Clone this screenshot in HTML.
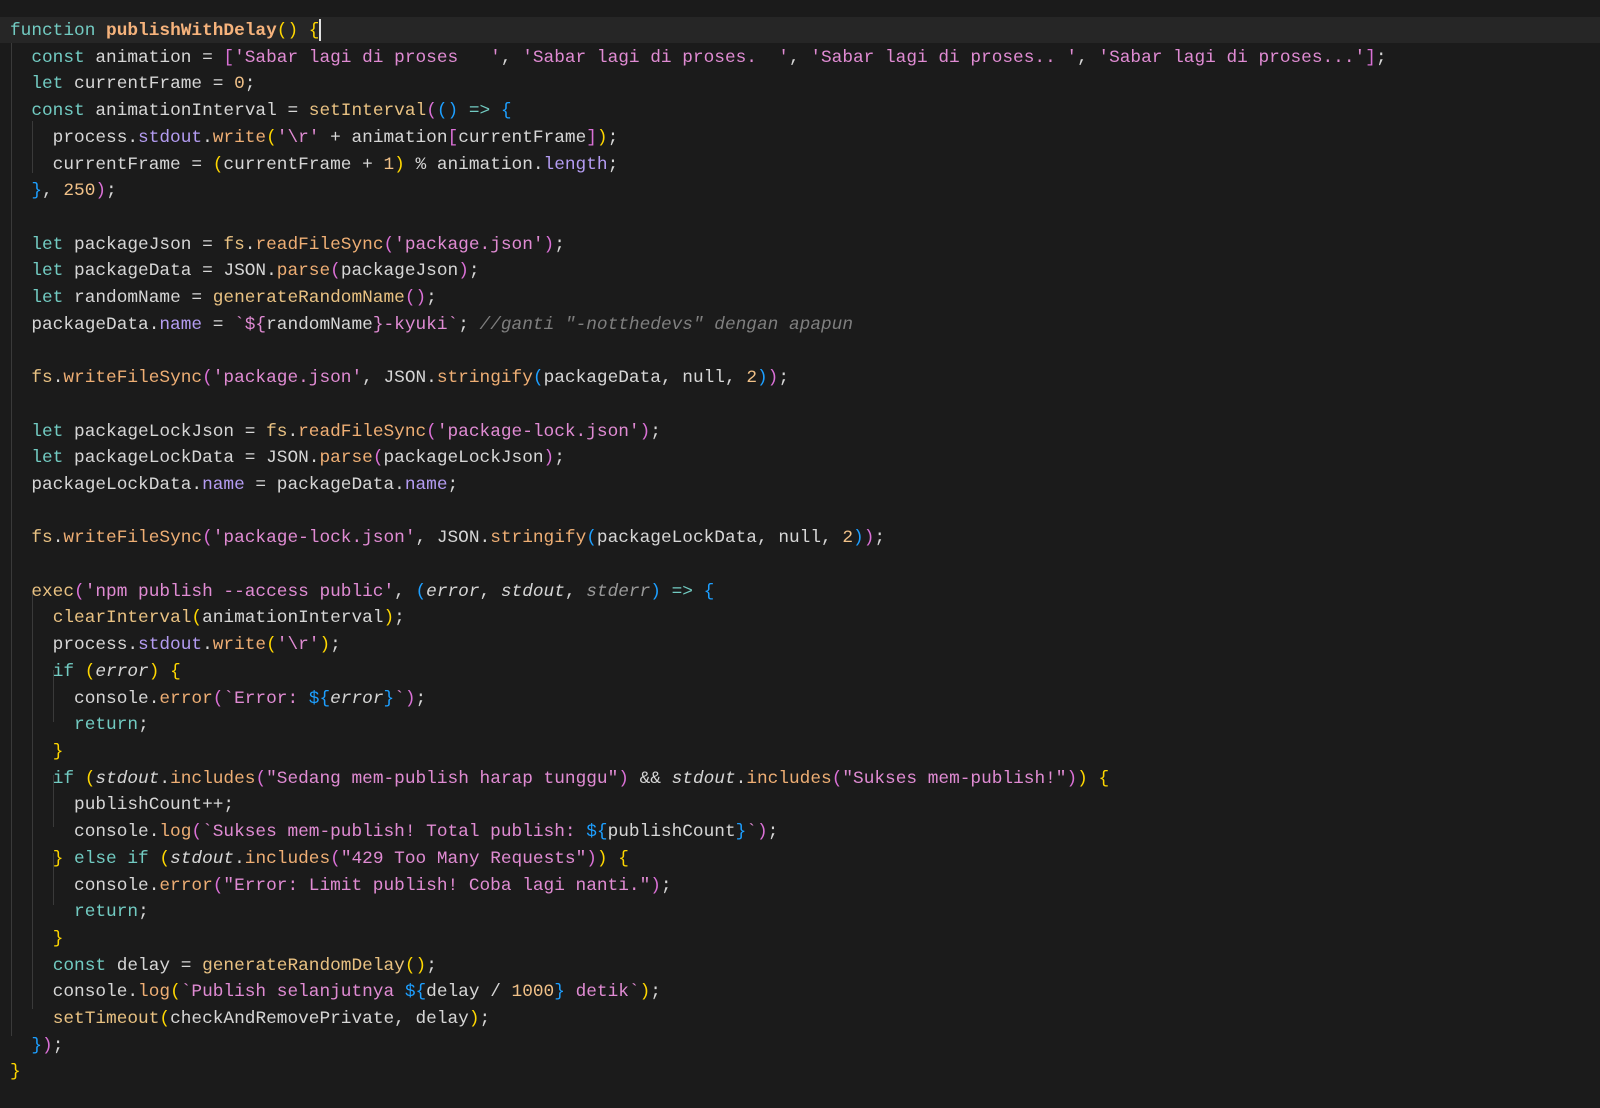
<!DOCTYPE html>
<html><head><meta charset="utf-8"><style>
html,body{margin:0;padding:0;background:#1b1b1b;width:1600px;height:1108px;overflow:hidden}
.code{position:absolute;left:10px;top:18px;font-family:"Liberation Mono",monospace;font-size:17.8px;line-height:26.7px;color:#d6d6d6;white-space:pre}
.hl{position:absolute;left:0;top:17px;width:1600px;height:26px;background:#262626}
.g{position:absolute;width:1px;background:#3a3a3a}
.k{color:#72cbc2}.fd{color:#f6b37c;font-weight:bold}.fn{color:#e8c182}.m{color:#eeae74}
.p{color:#b49cf2}.s{color:#e08bd3}.n{color:#f1c188}.c{color:#7f7f7f;font-style:italic}
.y{color:#ffd700}.v{color:#da70d6}.b{color:#1d9fff}.i{font-style:italic}.ig{color:#9a9a9a;font-style:italic}
.cur{display:inline-block;width:2px;height:22px;background:#e0e0e0;vertical-align:middle}
</style></head><body>
<div class="hl"></div>
<div class="g" style="left:11px;top:43px;height:993px"></div>
<div class="g" style="left:32px;top:121px;height:52px"></div>
<div class="g" style="left:32px;top:591px;height:418px"></div>
<div class="g" style="left:53px;top:670px;height:52px"></div>
<div class="g" style="left:53px;top:775px;height:52px"></div>
<div class="g" style="left:53px;top:853px;height:52px"></div>
<div class="code"><span class="k">function</span> <span class="fd">publishWithDelay</span><span class="y">()</span> <span class="y">{</span><span class="cur"></span>
  <span class="k">const</span> animation = <span class="v">[</span><span class="s">'Sabar lagi di proses   '</span>, <span class="s">'Sabar lagi di proses.  '</span>, <span class="s">'Sabar lagi di proses.. '</span>, <span class="s">'Sabar lagi di proses...'</span><span class="v">]</span>;
  <span class="k">let</span> currentFrame = <span class="n">0</span>;
  <span class="k">const</span> animationInterval = <span class="fn">setInterval</span><span class="v">(</span><span class="b">()</span> <span class="k">=&gt;</span> <span class="b">{</span>
    process.<span class="p">stdout</span>.<span class="m">write</span><span class="y">(</span><span class="s">'\r'</span> + animation<span class="v">[</span>currentFrame<span class="v">]</span><span class="y">)</span>;
    currentFrame = <span class="y">(</span>currentFrame + <span class="n">1</span><span class="y">)</span> % animation.<span class="p">length</span>;
  <span class="b">}</span>, <span class="n">250</span><span class="v">)</span>;

  <span class="k">let</span> packageJson = <span class="fn">fs</span>.<span class="m">readFileSync</span><span class="v">(</span><span class="s">'package.json'</span><span class="v">)</span>;
  <span class="k">let</span> packageData = JSON.<span class="m">parse</span><span class="v">(</span>packageJson<span class="v">)</span>;
  <span class="k">let</span> randomName = <span class="fn">generateRandomName</span><span class="v">()</span>;
  packageData.<span class="p">name</span> = <span class="s">`</span><span class="s">${</span>randomName<span class="s">}-kyuki`</span>; <span class="c">//ganti "-notthedevs" dengan apapun</span>

  <span class="fn">fs</span>.<span class="m">writeFileSync</span><span class="v">(</span><span class="s">'package.json'</span>, JSON.<span class="m">stringify</span><span class="b">(</span>packageData, null, <span class="n">2</span><span class="b">)</span><span class="v">)</span>;

  <span class="k">let</span> packageLockJson = <span class="fn">fs</span>.<span class="m">readFileSync</span><span class="v">(</span><span class="s">'package-lock.json'</span><span class="v">)</span>;
  <span class="k">let</span> packageLockData = JSON.<span class="m">parse</span><span class="v">(</span>packageLockJson<span class="v">)</span>;
  packageLockData.<span class="p">name</span> = packageData.<span class="p">name</span>;

  <span class="fn">fs</span>.<span class="m">writeFileSync</span><span class="v">(</span><span class="s">'package-lock.json'</span>, JSON.<span class="m">stringify</span><span class="b">(</span>packageLockData, null, <span class="n">2</span><span class="b">)</span><span class="v">)</span>;

  <span class="fn">exec</span><span class="v">(</span><span class="s">'npm publish --access public'</span>, <span class="b">(</span><span class="i">error</span>, <span class="i">stdout</span>, <span class="ig">stderr</span><span class="b">)</span> <span class="k">=&gt;</span> <span class="b">{</span>
    <span class="fn">clearInterval</span><span class="y">(</span>animationInterval<span class="y">)</span>;
    process.<span class="p">stdout</span>.<span class="m">write</span><span class="y">(</span><span class="s">'\r'</span><span class="y">)</span>;
    <span class="k">if</span> <span class="y">(</span><span class="i">error</span><span class="y">)</span> <span class="y">{</span>
      console.<span class="m">error</span><span class="v">(</span><span class="s">`Error: </span><span class="b">${</span><span class="i">error</span><span class="b">}</span><span class="s">`</span><span class="v">)</span>;
      <span class="k">return</span>;
    <span class="y">}</span>
    <span class="k">if</span> <span class="y">(</span><span class="i">stdout</span>.<span class="m">includes</span><span class="v">(</span><span class="s">"Sedang mem-publish harap tunggu"</span><span class="v">)</span> &amp;&amp; <span class="i">stdout</span>.<span class="m">includes</span><span class="v">(</span><span class="s">"Sukses mem-publish!"</span><span class="v">)</span><span class="y">)</span> <span class="y">{</span>
      publishCount++;
      console.<span class="m">log</span><span class="v">(</span><span class="s">`Sukses mem-publish! Total publish: </span><span class="b">${</span>publishCount<span class="b">}</span><span class="s">`</span><span class="v">)</span>;
    <span class="y">}</span> <span class="k">else if</span> <span class="y">(</span><span class="i">stdout</span>.<span class="m">includes</span><span class="v">(</span><span class="s">"429 Too Many Requests"</span><span class="v">)</span><span class="y">)</span> <span class="y">{</span>
      console.<span class="m">error</span><span class="v">(</span><span class="s">"Error: Limit publish! Coba lagi nanti."</span><span class="v">)</span>;
      <span class="k">return</span>;
    <span class="y">}</span>
    <span class="k">const</span> delay = <span class="fn">generateRandomDelay</span><span class="y">()</span>;
    console.<span class="m">log</span><span class="y">(</span><span class="s">`Publish selanjutnya </span><span class="b">${</span>delay / <span class="n">1000</span><span class="b">}</span><span class="s"> detik`</span><span class="y">)</span>;
    <span class="fn">setTimeout</span><span class="y">(</span>checkAndRemovePrivate, delay<span class="y">)</span>;
  <span class="b">}</span><span class="v">)</span>;
<span class="y">}</span></div>
</body></html>
